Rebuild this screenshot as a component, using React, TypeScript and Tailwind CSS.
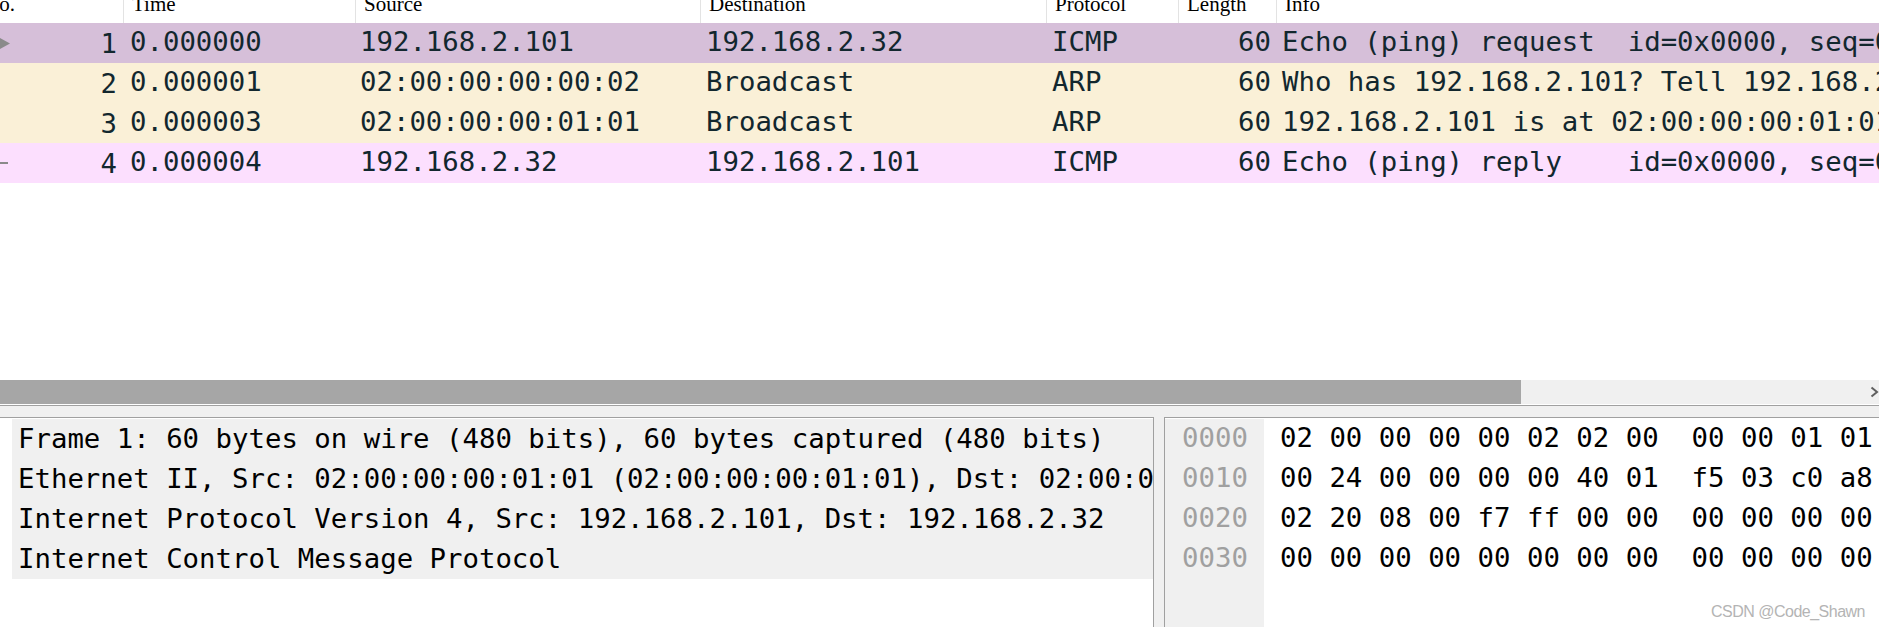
import React from "react";

const MONO = "font-['DejaVu_Sans_Mono',monospace]";

type Row = {
  no: string;
  time: string;
  src: string;
  dst: string;
  proto: string;
  len: string;
  info: string;
  bg: string;
  mark: "arrow" | "dash" | "none";
};

const rows: Row[] = [
  {
    no: "1",
    time: "0.000000",
    src: "192.168.2.101",
    dst: "192.168.2.32",
    proto: "ICMP",
    len: "60",
    info: "Echo (ping) request  id=0x0000, seq=0/0, ttl=64 (reply in 4)",
    bg: "bg-[#d6bfd9]",
    mark: "arrow",
  },
  {
    no: "2",
    time: "0.000001",
    src: "02:00:00:00:00:02",
    dst: "Broadcast",
    proto: "ARP",
    len: "60",
    info: "Who has 192.168.2.101? Tell 192.168.2.32",
    bg: "bg-[#faf0d7]",
    mark: "none",
  },
  {
    no: "3",
    time: "0.000003",
    src: "02:00:00:00:01:01",
    dst: "Broadcast",
    proto: "ARP",
    len: "60",
    info: "192.168.2.101 is at 02:00:00:00:01:01",
    bg: "bg-[#faf0d7]",
    mark: "none",
  },
  {
    no: "4",
    time: "0.000004",
    src: "192.168.2.32",
    dst: "192.168.2.101",
    proto: "ICMP",
    len: "60",
    info: "Echo (ping) reply    id=0x0000, seq=0/0, ttl=64 (request in 1)",
    bg: "bg-[#fcdffe]",
    mark: "dash",
  },
];

const details = [
  "Frame 1: 60 bytes on wire (480 bits), 60 bytes captured (480 bits)",
  "Ethernet II, Src: 02:00:00:00:01:01 (02:00:00:00:01:01), Dst: 02:00:0",
  "Internet Protocol Version 4, Src: 192.168.2.101, Dst: 192.168.2.32",
  "Internet Control Message Protocol",
];

const hex = [
  ["0000", "02 00 00 00 00 02 02 00  00 00 01 01"],
  ["0010", "00 24 00 00 00 00 40 01  f5 03 c0 a8"],
  ["0020", "02 20 08 00 f7 ff 00 00  00 00 00 00"],
  ["0030", "00 00 00 00 00 00 00 00  00 00 00 00"],
];

const GRID = "grid grid-cols-[123px_232px_345px_346px_132px_98px_1fr]";

function HeaderCell({ label, first }: { label: string; first?: boolean }) {
  return (
    <div
      className={
        first
          ? "overflow-hidden h-[23px]"
          : "overflow-hidden h-[23px] border-l border-[#e3e3e3] pl-[8px]"
      }
    >
      <div
        className={
          first
            ? "-mt-[6px] -ml-[16px] leading-[21px] whitespace-pre"
            : "-mt-[6px] leading-[21px] whitespace-pre"
        }
      >
        {label}
      </div>
    </div>
  );
}

export default function App() {
  return (
    <div className="relative w-[1879px] h-[627px] overflow-hidden bg-white flex flex-col">
      {/* Packet list */}
      <div className="h-[380px] flex flex-col bg-white">
        <div
          className={`${GRID} h-[23px] bg-white text-[21px] text-black font-['Liberation_Serif',serif]`}
        >
          <HeaderCell label="No." first />
          <HeaderCell label="Time" />
          <HeaderCell label="Source" />
          <HeaderCell label="Destination" />
          <HeaderCell label="Protocol" />
          <HeaderCell label="Length" />
          <HeaderCell label="Info" />
        </div>
        {rows.map((r) => (
          <div
            key={r.no}
            className={`${GRID} ${r.bg} h-[40px] leading-[37px] text-[27.35px] text-[#12272e] ${MONO} whitespace-pre`}
          >
            <div className="flex items-center justify-between overflow-hidden pr-[6px]">
              <div className="w-[12px] flex items-center">
                {r.mark === "arrow" && (
                  <svg width="10" height="11" viewBox="0 0 10 11">
                    <polygon points="0,0 10,5.5 0,11" fill="#8a8a8a" />
                  </svg>
                )}
                {r.mark === "dash" && <div className="w-[8px] h-[2px] bg-[#8a8a8a]" />}
              </div>
              <span>{r.no}</span>
            </div>
            <div className="overflow-hidden pl-[7px]">{r.time}</div>
            <div className="overflow-hidden pl-[5px]">{r.src}</div>
            <div className="overflow-hidden pl-[6px]">{r.dst}</div>
            <div className="overflow-hidden pl-[6px]">{r.proto}</div>
            <div className="overflow-hidden pr-[5px] text-right">{r.len}</div>
            <div className="overflow-hidden pl-[6px]">{r.info}</div>
          </div>
        ))}
        <div className="flex-1 bg-white" />
      </div>

      {/* Horizontal scrollbar */}
      <div className="h-[24px] bg-[#f0f0f0] flex items-center">
        <div className="w-[1521px] h-full bg-[#a6a6a6]" />
        <div className="flex-1" />
        <svg width="9" height="12" viewBox="0 0 9 12">
          <polyline points="1.5,1.5 7,6 1.5,10.5" fill="none" stroke="#5f5f5f" strokeWidth="2" />
        </svg>
      </div>
      <div className="h-px bg-white" />
      <div className="h-px bg-[#a0a0a0]" />
      <div className="h-[11px] bg-[#f0f0f0]" />

      {/* Bottom panes */}
      <div className="flex flex-1 bg-[#f0f0f0] min-h-0">
        {/* Details */}
        <div className="w-[1154px] border-t border-r border-[#a0a0a0] bg-white pt-[1px] pl-[12px] overflow-hidden">
          <div className={`bg-[#f0f0f0] text-black text-[27.35px] ${MONO}`}>
            {details.map((d) => (
              <div key={d} className="h-[40px] leading-[40px] pl-[6px] whitespace-pre overflow-hidden">
                {d}
              </div>
            ))}
          </div>
        </div>
        <div className="w-[10px]" />
        {/* Hex */}
        <div className="flex-1 border-t border-l border-[#a0a0a0] bg-white pt-[1px] flex overflow-hidden">
          <div className={`w-[99px] bg-[#f0f0f0] text-[#a0a0a0] text-[27.35px] ${MONO}`}>
            {hex.map(([o]) => (
              <div key={o} className="h-[40px] leading-[38px] pl-[17px] whitespace-pre">
                {o}
              </div>
            ))}
          </div>
          <div className={`flex-1 text-black text-[27.35px] ${MONO} overflow-hidden`}>
            {hex.map(([o, b]) => (
              <div key={o} className="h-[40px] leading-[38px] pl-[16px] whitespace-pre overflow-hidden">
                {b}
              </div>
            ))}
          </div>
        </div>
      </div>

      {/* Watermark overlay */}
      <div className="absolute right-[14px] bottom-[7px] text-[16px] tracking-[-0.5px] text-[#b4b4b4] font-['Liberation_Sans',sans-serif] leading-none">
        CSDN @Code_Shawn
      </div>
    </div>
  );
}
